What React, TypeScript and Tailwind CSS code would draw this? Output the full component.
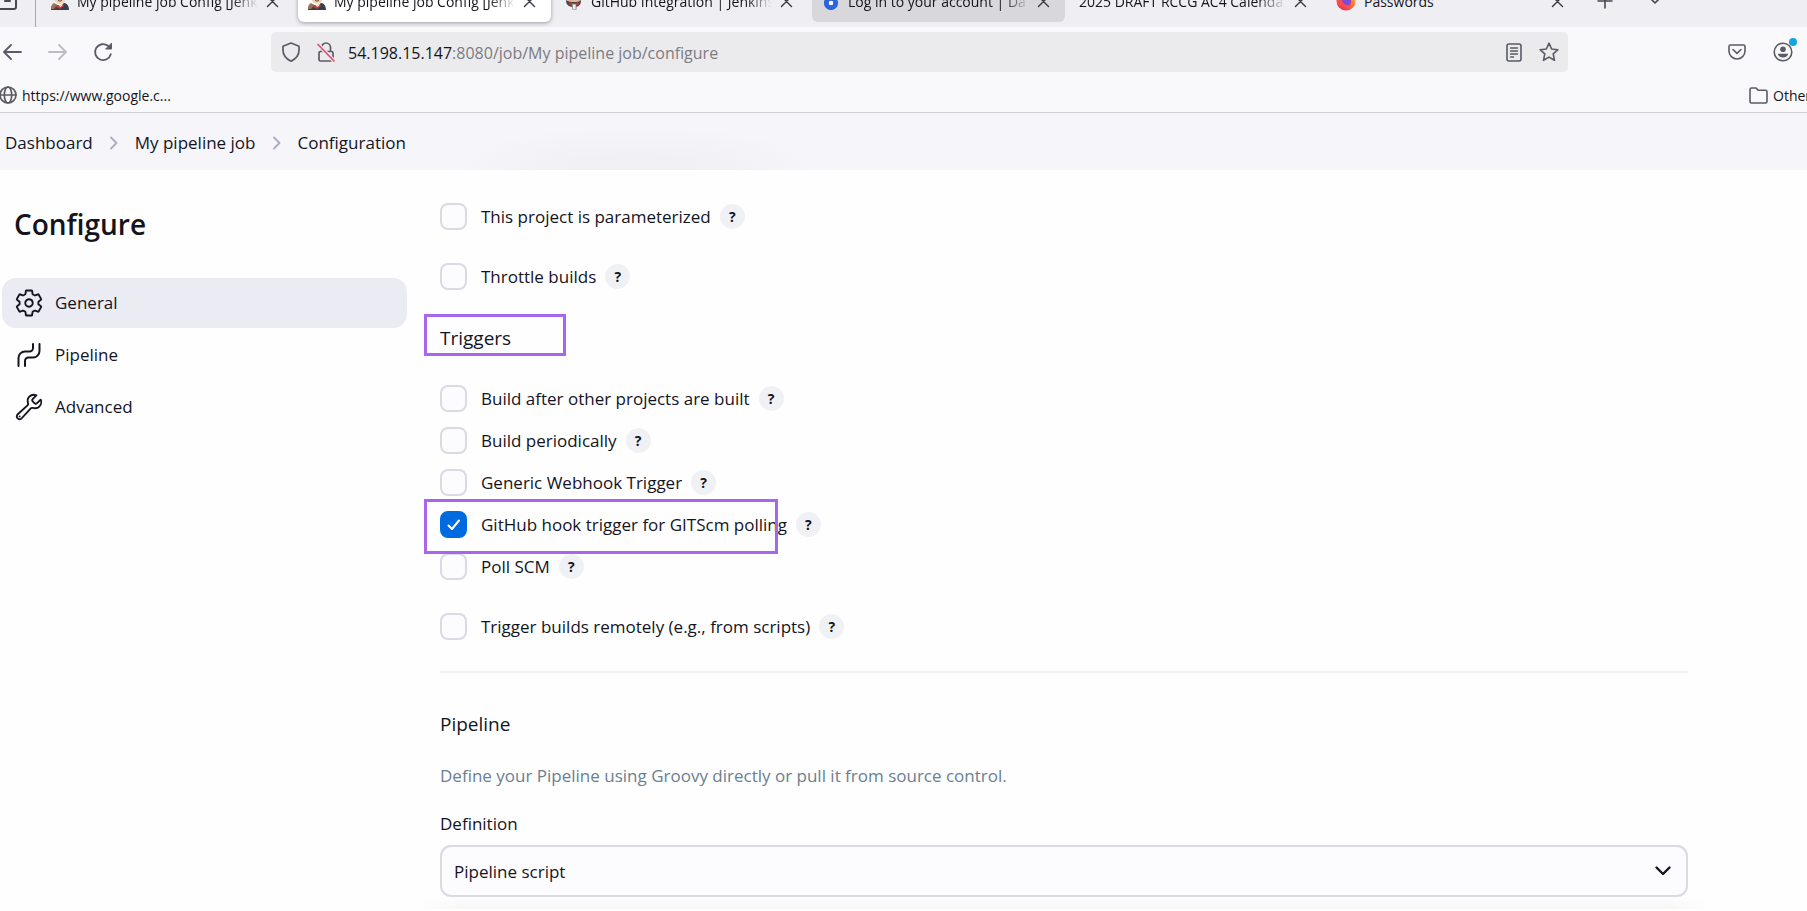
import type { ReactNode } from "react";
import { IoBuildOutline, IoSettingsOutline } from "react-icons/io5";

const stroke = {
  fill: "none",
  stroke: "currentColor",
  strokeLinecap: "round" as const,
  strokeLinejoin: "round" as const,
};

function JenkinsIcon() {
  return (
    <svg width="18" height="18" viewBox="0 0 18 18" className="shrink-0">
      <ellipse cx="9" cy="6" rx="5.5" ry="6" fill="#f0d6b7" />
      <path d="M3.5 6C3 2 6 0 9 0s6 2 5.5 6C12 3 6 3 3.5 6z" fill="#3d3530" />
      <path d="M7 8.5q2 1.2 4 0" stroke="#6d4b3d" fill="none" />
      <path d="M0 18c0-4 2-6 4-6l5 2 4-3c3 0 5 3 5 7z" fill="#35404d" />
      <path d="M5 13l4 1 3-2 1 2-4 3-4-2z" fill="#c9382f" />
      <path d="M0 17c0-3 1-5 3-6l3 2-3 4z" fill="#9a7458" />
      <path d="M7 12l2 2 3-3-1 3-2 1z" fill="#f4f0ea" />
    </svg>
  );
}

function ButlerIcon() {
  return (
    <svg width="18" height="18" viewBox="0 0 18 18" className="shrink-0">
      <circle cx="9" cy="7" r="6.5" fill="#d9b8a2" />
      <path d="M1 8c0 6 4 7 8 7s7-1 7-7l-3 2H5z" fill="#4b4648" />
      <path d="M5 9l3 4H4zM13 9l-3 4h4z" fill="#bd3a3a" />
      <path d="M7 12h4v6H8z" fill="#f5f5f5" stroke="#77777c" strokeWidth=".8" />
    </svg>
  );
}

function DigitalOceanIcon() {
  return (
    <svg width="18" height="18" viewBox="0 0 18 18" className="shrink-0">
      <circle cx="9" cy="11" r="4.6" fill="#ffffff" stroke="#2c63e0" strokeWidth="5" />
      <circle cx="9" cy="11" r="2.2" fill="#ffffff" />
    </svg>
  );
}

function FirefoxIcon() {
  return (
    <svg width="20" height="20" viewBox="0 0 20 20" className="shrink-0">
      <defs>
        <linearGradient id="fx" x1="1" y1="0" x2="0.2" y2="1">
          <stop offset="0" stopColor="#ffd43b" />
          <stop offset=".45" stopColor="#ff7a2f" />
          <stop offset="1" stopColor="#f0245c" />
        </linearGradient>
      </defs>
      <circle cx="10" cy="10" r="9.5" fill="url(#fx)" />
      <circle cx="10.5" cy="10.5" r="4.6" fill="#7a4bd8" />
      <path d="M1 8c2-1 4-1 5 1 1 5 5 6 9 4-1 4-10 5-14-1z" fill="#fb4b4c" />
    </svg>
  );
}

function CloseButton() {
  return (
    <button aria-label="Close tab" className="shrink-0 text-[#3a3944]">
      <svg width="13" height="13" viewBox="0 0 13 13" {...stroke} strokeWidth="1.4">
        <path d="M1.5 1.5l10 10M11.5 1.5l-10 10" />
      </svg>
    </button>
  );
}

type TabProps = { title: string; icon?: ReactNode; state?: "active" | "hover"; fade?: boolean };

const tabs: TabProps[] = [
  { title: "My pipeline job Config [Jenk", icon: <JenkinsIcon />, fade: true },
  { title: "My pipeline job Config [Jenk", icon: <JenkinsIcon />, state: "active", fade: true },
  { title: "GitHub Integration | Jenkins", icon: <ButlerIcon />, fade: true },
  { title: "Log in to your account | Da", icon: <DigitalOceanIcon />, state: "hover", fade: true },
  { title: "2025 DRAFT RCCG AC4 Calenda", fade: true },
  { title: "Passwords", icon: <FirefoxIcon /> },
];

function Tab({ title, icon, state, fade }: TabProps) {
  const look =
    state === "active"
      ? "bg-white shadow-[0_1px_4px_rgba(0,0,0,0.35)]"
      : state === "hover"
        ? "bg-[#d8d7dc]"
        : "";
  return (
    <div className={`flex h-[42px] w-[253px] shrink-0 items-center gap-2 rounded-md pl-[10px] pr-[15px] text-[14px] text-[#15141a] ${look}`}>
      {icon}
      <span
        className={`min-w-0 flex-1 overflow-hidden whitespace-nowrap ${fade ? "[mask-image:linear-gradient(to_right,black_86%,transparent)]" : ""}`}
      >
        {title}
      </span>
      <CloseButton />
    </div>
  );
}

function TabStrip() {
  return (
    <div className="flex h-[27px] items-end gap-1 overflow-hidden bg-[#efeef3] pb-[5px]">
      <div className="flex h-[42px] w-[37px] shrink-0 items-center">
        <button aria-label="Firefox View" className="text-[#4a4953]">
          <svg width="17" height="18" viewBox="0 0 17 18" {...stroke} strokeWidth="2">
            <path d="M0 1h14a2 2 0 0 1 2 2v12a2 2 0 0 1-2 2H0M5 9h5" />
          </svg>
        </button>
        <span className="-mb-[10px] ml-[18px] h-[42px] w-px bg-[#a9a8b2]" />
      </div>
      {tabs.map((tab, i) => (
        <Tab key={i} {...tab} />
      ))}
      <div className="flex h-[42px] items-center gap-9 pl-[14px] text-[#4a4953]">
        <button aria-label="New tab">
          <svg width="16" height="16" viewBox="0 0 16 16" {...stroke} strokeWidth="1.6">
            <path d="M8 1v14M1 8h14" />
          </svg>
        </button>
        <button aria-label="List all tabs">
          <svg width="12" height="8" viewBox="0 0 12 8" {...stroke} strokeWidth="1.6">
            <path d="M1.5 1.5L6 6l4.5-4.5" />
          </svg>
        </button>
      </div>
    </div>
  );
}

function NavBar() {
  return (
    <div className="flex h-[50px] items-center text-[#5b5b66]">
      <div className="flex w-[271px] shrink-0 items-center gap-[26px] pl-[3px]">
        <button aria-label="Back">
          <svg width="19" height="18" viewBox="0 0 19 18" {...stroke} strokeWidth="1.8">
            <path d="M18 9H1.5M8 2L1 9l7 7" />
          </svg>
        </button>
        <button aria-label="Forward" disabled className="text-[#bcbcc4]">
          <svg width="19" height="18" viewBox="0 0 19 18" {...stroke} strokeWidth="1.8">
            <path d="M1 9h16.5M11 2l7 7-7 7" />
          </svg>
        </button>
        <button aria-label="Reload">
          <svg width="20" height="20" viewBox="0 0 20 20" {...stroke} strokeWidth="1.8">
            <path d="M17.8 12.2A8 8 0 1 1 15 3.800l2.500 2.200" />
            <path d="M18.500 1.500v5.500H13z" fill="currentColor" strokeWidth="1" />
          </svg>
        </button>
      </div>
      <div className="flex h-10 min-w-0 flex-1 items-center rounded-[5px] bg-[#ebebed] pl-[11px] pr-[9px]">
        <svg width="18" height="20" viewBox="0 0 18 20" {...stroke} strokeWidth="1.7" className="shrink-0">
          <path d="M9 1l8 3.200v4c0 5-3 8.500-8 11-5-2.500-8-6-8-11v-4z" />
        </svg>
        <svg width="18" height="20" viewBox="0 0 18 20" {...stroke} strokeWidth="1.7" className="ml-[17px] shrink-0">
          <path d="M4.500 9.500V5.500a4.500 4.500 0 0 1 9 0v4M3.500 9.500h11a1.500 1.500 0 0 1 1.500 1.500v6.500a1.500 1.500 0 0 1-1.500 1.500h-11A1.500 1.500 0 0 1 2 17.500V11a1.500 1.500 0 0 1 1.500-1.500z" />
          <path d="M1 2.500l16 16.500" stroke="#ebebed" strokeWidth="4" />
          <path d="M1 2.500l16 16.500" stroke="#e2506f" />
        </svg>
        <div role="textbox" aria-label="Address" className="ml-[13px] min-w-0 flex-1 whitespace-nowrap pt-0.5 text-[16px] leading-6 text-[#7b7b82]">
          <span className="text-[#15141a]">54.198.15.147</span>:8080/job/My pipeline job/configure
        </div>
        <button aria-label="Reader view" className="shrink-0">
          <svg width="16" height="19" viewBox="0 0 16 19" {...stroke} strokeWidth="1.6">
            <rect x="1" y="1" width="14" height="17" rx="2" />
            <path d="M4.500 5h7M4.500 8h7M4.500 11h7M4.500 14h3" strokeWidth="1.400" />
          </svg>
        </button>
        <button aria-label="Bookmark this page" className="ml-[17px] shrink-0">
          <svg width="20" height="20" viewBox="0 0 20 20" {...stroke} strokeWidth="1.6">
            <path d="M10 1.200l2.600 5.800 6.300.700-4.700 4.200 1.300 6.400L10 15.100l-5.500 3.200 1.300-6.400L1.100 7.700l6.300-.700z" />
          </svg>
        </button>
      </div>
      <div className="flex w-[239px] shrink-0 items-center justify-end gap-[27px] pr-[14px]">
        <button aria-label="Save to Pocket">
          <svg width="18" height="16" viewBox="0 0 18 16" {...stroke} strokeWidth="1.6">
            <path d="M2.500 1h13A1.500 1.500 0 0 1 17 2.500V7A8 8 0 0 1 1 7V2.500A1.500 1.500 0 0 1 2.500 1z" />
            <path d="M5 5.500l4 3.800 4-3.800" />
          </svg>
        </button>
        <button aria-label="Account" className="relative">
          <svg width="20" height="20" viewBox="0 0 20 20" {...stroke} strokeWidth="1.6">
            <circle cx="10" cy="10" r="8.800" />
            <circle cx="10" cy="7.200" r="2.800" fill="currentColor" stroke="none" />
            <path d="M4.800 11.800h10.400c-.400 2.400-2.400 3.700-5.200 3.700s-4.800-1.300-5.200-3.700z" fill="currentColor" stroke="none" />
          </svg>
          <span className="absolute -right-1 -top-1 size-2 rounded-full bg-[#12a5dd]" />
        </button>
      </div>
    </div>
  );
}

function BookmarksBar() {
  return (
    <div className="flex h-[35px] items-center justify-between overflow-hidden pt-px text-[14px] text-[#15141a]">
      <a href="#google" className="flex items-center gap-[5px]">
        <svg width="17" height="18" viewBox="0 0 17 18" {...stroke} strokeWidth="1.7" className="text-[#5b5b66]">
          <circle cx="8" cy="9" r="8" />
          <ellipse cx="8" cy="9" rx="3.700" ry="8" />
          <path d="M0 9h16" />
        </svg>
        https://www.google.c...
      </a>
      <button className="flex w-[58px] items-center gap-[5px] whitespace-nowrap">
        <svg width="19" height="17" viewBox="0 0 19 17" {...stroke} strokeWidth="1.6" className="shrink-0 text-[#5b5b66]">
          <path d="M1 14.500v-12A1.500 1.500 0 0 1 2.500 1h4.200c1.300 0 1.300 2.300 3 2.300h6.800A1.500 1.500 0 0 1 18 4.800v9.700a1.500 1.500 0 0 1-1.500 1.500h-14A1.500 1.500 0 0 1 1 14.500z" />
        </svg>
        Other
      </button>
    </div>
  );
}

function Breadcrumbs() {
  const crumbs = ["Dashboard", "My pipeline job", "Configuration"];
  return (
    <nav
      aria-label="Breadcrumb"
      className="border-t border-[#cfcfd8] bg-[#f5f5fa] bg-[radial-gradient(190px_45px_at_635px_100%,#f1f1f5_30%,transparent)]"
    >
      <ol className="flex h-[57px] items-center gap-4 pl-[5px] pt-0.5 text-[17px] text-[#14141f]">
        {crumbs.map((crumb, i) => (
          <li key={crumb} className="flex items-center gap-4">
            {i > 0 && (
              <svg width="10" height="14" viewBox="0 0 10 14" {...stroke} strokeWidth="1.8" className="text-[#a9acc6]">
                <path d="M2 1.500L7.500 7 2 12.500" />
              </svg>
            )}
            <a href={`#${i}`}>{crumb}</a>
          </li>
        ))}
      </ol>
    </nav>
  );
}

function PipelineIcon() {
  return (
    <svg width="30" height="30" viewBox="0 0 30 30" {...stroke} strokeWidth="2">
      <path d="M19 4v4a3.500 3.500 0 0 1-3.500 3.500H11A6.500 6.500 0 0 0 4.500 18v8" />
      <path d="M25.500 4v7a6.500 6.500 0 0 1-6.500 6.500h-4.500A3.500 3.500 0 0 0 11 21v5" />
    </svg>
  );
}

function SideNav() {
  const items = [
    { label: "General", icon: <IoSettingsOutline size={30} />, active: true },
    { label: "Pipeline", icon: <PipelineIcon />, active: false },
    { label: "Advanced", icon: <IoBuildOutline size={30} />, active: false },
  ];
  return (
    <aside className="w-[405px] shrink-0 pt-[35px]">
      <h1 className="pl-3 text-[28px] font-semibold leading-[38px] text-[#14141f]">Configure</h1>
      <nav aria-label="Sections" className="mt-[35px] flex flex-col gap-0.5">
        {items.map((item) => (
          <a
            key={item.label}
            href={`#${item.label}`}
            className={`flex h-[50px] items-center gap-[11px] rounded-[14px] pl-3 text-[17px] text-[#14141f] ${item.active ? "bg-[#ebebf4]" : ""}`}
          >
            {item.icon}
            {item.label}
          </a>
        ))}
      </nav>
    </aside>
  );
}

function Option({ id, label, checked = false, children }: { id: string; label: string; checked?: boolean; children?: ReactNode }) {
  return (
    <div className="relative flex h-[42px] items-center">
      <span className="grid">
        <input
          id={id}
          type="checkbox"
          defaultChecked={checked}
          className="peer col-start-1 row-start-1 size-[27px] appearance-none rounded-[8px] border-2 border-[#d9dbe3] bg-[#fcfcff] checked:border-[#006be0] checked:bg-[#006be0]"
        />
        <svg
          width="27"
          height="27"
          viewBox="0 0 27 27"
          {...stroke}
          strokeWidth="2"
          className="pointer-events-none col-start-1 row-start-1 text-white opacity-0 peer-checked:opacity-100"
        >
          <path d="M8.500 14.500l3.500 3.500 7-8.500" />
        </svg>
      </span>
      <label htmlFor={id} className="ml-[14px] pt-0.5">
        {label}
      </label>
      <button aria-label={`Help for ${label}`} className="ml-[9px] size-[25px] rounded-full bg-[#f0f1f5] text-[14px] font-bold leading-[25px]">
        ?
      </button>
      {children}
    </div>
  );
}

function ConfigForm() {
  return (
    <form className="min-w-0 flex-1 text-[17px] leading-[26px]">
      <div className="flex flex-col gap-[18px]">
        <Option id="parameterized" label="This project is parameterized" />
        <Option id="throttle" label="Throttle builds" />
      </div>
      <div className="mt-5 flex flex-col gap-[18px]">
        <h2 className="relative flex h-[42px] items-center text-[19px]">
          Triggers
          <span className="pointer-events-none absolute -left-4 -top-[3px] h-[42px] w-[142px] border-[3px] border-[#a866ea]" />
        </h2>
        <div>
          <Option id="after" label="Build after other projects are built" />
          <Option id="periodic" label="Build periodically" />
          <Option id="webhook" label="Generic Webhook Trigger" />
          <Option id="github" label="GitHub hook trigger for GITScm polling" checked>
            <span className="pointer-events-none absolute -left-4 -top-1 z-10 h-[55px] w-[354px] border-[3px] border-[#a866ea]" />
          </Option>
          <Option id="poll" label="Poll SCM" />
        </div>
        <Option id="remote" label="Trigger builds remotely (e.g., from scripts)" />
      </div>
      <hr className="mt-6 border-t-2 border-[#f3f3f4]" />
      <h2 className="mt-[38px] text-[19px]">Pipeline</h2>
      <p className="mt-[26px] text-[#6b7f92]">Define your Pipeline using Groovy directly or pull it from source control.</p>
      <label htmlFor="definition" className="mt-[22px] block">
        Definition
      </label>
      <div className="mt-2 grid items-center">
        <select
          id="definition"
          className="col-start-1 row-start-1 h-[52px] w-full appearance-none rounded-[11px] border-2 border-[#d9dbe0] bg-[#fcfcff] pl-3 pt-0.5"
        >
          <option>Pipeline script</option>
        </select>
        <svg
          width="18"
          height="12"
          viewBox="0 0 18 12"
          {...stroke}
          strokeWidth="2.4"
          className="pointer-events-none col-start-1 row-start-1 mr-4 justify-self-end"
        >
          <path d="M2.500 2.500L9 9l6.500-6.500" />
        </svg>
      </div>
      <div className="-mx-5 h-3 bg-linear-to-b from-[#fdfdfd] to-[#f7f7f8] [mask-image:linear-gradient(to_right,transparent,black_40px,black_calc(100%-40px),transparent)]" />
    </form>
  );
}

export default function App() {
  return (
    <div className="min-h-screen bg-[#fefefe] font-['Open_Sans','Noto_Sans',sans-serif] text-[#14141f]">
      <header className="bg-[#f9f9fb]">
        <TabStrip />
        <NavBar />
        <BookmarksBar />
      </header>
      <Breadcrumbs />
      <div className="flex items-start pl-0.5">
        <SideNav />
        <main className="flex min-w-0 flex-1 pl-[33px] pr-[119px] pt-[25px]">
          <ConfigForm />
        </main>
      </div>
    </div>
  );
}
